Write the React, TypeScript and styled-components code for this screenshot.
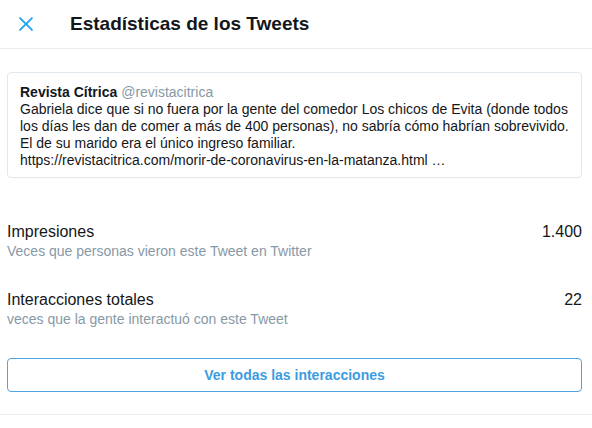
import styled, { createGlobalStyle } from "styled-components";

const GlobalStyle = createGlobalStyle`
	body {
		margin: 0;
		background: #ffffff;
		font-family: "Liberation Sans", Arial, sans-serif;
		color: #14171a;
	}
`;

const stats = [
	{
		label: "Impresiones",
		hint: "Veces que personas vieron este Tweet en Twitter",
		value: "1.400",
	},
	{
		label: "Interacciones totales",
		hint: "veces que la gente interactuó con este Tweet",
		value: "22",
	},
];

export default function App() {
	return (
		<>
			<GlobalStyle />
			<Modal>
				<Header>
					<CloseButton type="button" aria-label="Cerrar">
						<svg viewBox="0 0 24 24" width="22" height="22">
							<path
								fill="#1da1f2"
								d="M13.414 12l5.793-5.793c.39-.39.39-1.023 0-1.414s-1.023-.39-1.414 0L12 10.586 6.207 4.793c-.39-.39-1.023-.39-1.414 0s-.39 1.023 0 1.414L10.586 12l-5.793 5.793c-.39.39-.39 1.023 0 1.414.195.195.45.293.707.293s.512-.098.707-.293L12 13.414l5.793 5.793c.195.195.45.293.707.293s.512-.098.707-.293c.39-.39.39-1.023 0-1.414L13.414 12z"
							/>
						</svg>
					</CloseButton>
					<Title>Estadísticas de los Tweets</Title>
				</Header>
				<Body>
					<TweetCard>
						<Author>
							<Name>Revista Cítrica</Name> <Handle>@revistacitrica</Handle>
						</Author>
						<TweetText>
							Gabriela dice que si no fuera por la gente del comedor Los chicos de Evita (donde todos
							los días les dan de comer a más de 400 personas), no sabría cómo habrían sobrevivido.
							<br />
							El de su marido era el único ingreso familiar.
							<br />
							https://revistacitrica.com/morir-de-coronavirus-en-la-matanza.html …
						</TweetText>
					</TweetCard>
					<StatList>
						{stats.map((s) => (
							<StatRow key={s.label}>
								<StatText>
									<StatLabel>{s.label}</StatLabel>
									<StatHint>{s.hint}</StatHint>
								</StatText>
								<StatValue>{s.value}</StatValue>
							</StatRow>
						))}
					</StatList>
					<OutlineButton type="button">Ver todas las interacciones</OutlineButton>
				</Body>
				<Footer />
			</Modal>
		</>
	);
}

const Modal = styled.div`
	width: 592px;
	background: #ffffff;
`;
const Header = styled.header`
	display: flex;
	align-items: center;
	height: 48px;
	padding-left: 15px;
	border-bottom: 1px solid #e6ecf0;
`;
const CloseButton = styled.button`
	display: flex;
	padding: 0;
	margin: -1px 0 0 0;
	border: none;
	background: none;
	cursor: pointer;
`;
const Title = styled.h1`
	margin: 0 0 0 33px;
	font-size: 19px;
	font-weight: 700;
	color: #14171a;
`;
const Body = styled.div`
	padding: 23px 10px 22px 7px;
`;
const TweetCard = styled.div`
	padding: 11px 12px 8px;
	border: 1px solid #e1e8ed;
	border-radius: 4px;
	font-size: 14px;
	line-height: 17px;
`;
const Author = styled.div``;
const Name = styled.span`
	font-weight: 700;
	color: #14171a;
`;
const Handle = styled.span`
	color: #8899a6;
`;
const TweetText = styled.p`
	margin: 0;
	color: #14171a;
`;
const StatList = styled.div`
	display: flex;
	flex-direction: column;
	gap: 30px;
	margin-top: 44px;
`;
const StatRow = styled.div`
	display: flex;
	justify-content: space-between;
	align-items: flex-start;
`;
const StatText = styled.div`
	display: flex;
	flex-direction: column;
`;
const StatLabel = styled.span`
	font-size: 16px;
	line-height: 20px;
	color: #14171a;
`;
const StatHint = styled.span`
	font-size: 14px;
	line-height: 18px;
	color: #8899a6;
`;
const StatValue = styled.span`
	font-size: 16px;
	line-height: 20px;
	color: #14171a;
`;
const OutlineButton = styled.button`
	display: block;
	width: 100%;
	height: 34px;
	margin-top: 30px;
	border: 1px solid #4fa3e0;
	border-radius: 4px;
	background: #ffffff;
	font-family: "Liberation Sans", Arial, sans-serif;
	font-size: 14px;
	font-weight: 700;
	color: #3d9be0;
	cursor: pointer;
`;
const Footer = styled.div`
	border-top: 1px solid #e6ecf0;
	height: 14px;
`;
